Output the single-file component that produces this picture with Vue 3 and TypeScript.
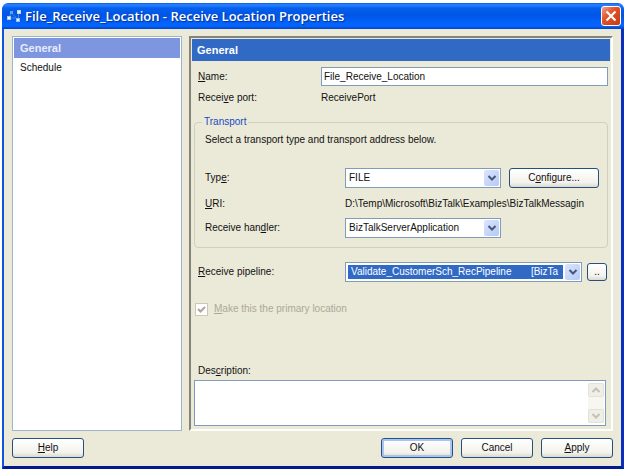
<script setup lang="ts">
import { ref } from 'vue'

const pages = ['General', 'Schedule']
const activePage = ref('General')
const name = ref('File_Receive_Location')
const transport = ref('FILE')
const handler = ref('BizTalkServerApplication')
const pipeline = ref('Validate_CustomerSch_RecPipeline\u00a0\u00a0\u00a0\u00a0\u00a0\u00a0\u00a0[BizTa')
const primary = ref(true)
const description = ref('')
</script>

<template>
  <main class="dialog">
    <header class="titlebar">
      <svg class="app-icon" width="16" height="16" viewBox="0 0 16 16" aria-hidden="true">
        <path d="M3.5 9 L5 4.5 M5 4.5 L10 9.5 M3.5 10 H10 M12.5 5 V12" fill="none" stroke="#4a86d8" />
        <rect x="1" y="8" width="4" height="4" fill="#a9cdf0" />
        <rect x="4" y="3" width="3" height="3" fill="#5ea2f0" />
        <rect x="11" y="2" width="4" height="4" fill="#b9d8f4" />
        <rect x="10" y="10" width="4" height="4" fill="#8fc0e8" />
        <rect x="2" y="9" width="2" height="2" fill="#fff" />
        <rect x="12" y="3" width="2" height="2" fill="#e8f4ff" />
        <rect x="11" y="11" width="2" height="2" fill="#e8f4ff" />
      </svg>
      <h1>File_Receive_Location - Receive Location Properties</h1>
      <button class="close" type="button" aria-label="Close">
        <svg width="18" height="18" viewBox="0 0 18 18" aria-hidden="true">
          <path d="M4.5 4.5 L13.5 13.5 M13.5 4.5 L4.5 13.5" stroke="#fff" stroke-width="2.2" />
        </svg>
      </button>
    </header>

    <div class="client">
      <div class="columns">
        <nav class="pages">
          <button
            v-for="page in pages"
            :key="page"
            type="button"
            class="page"
            :class="{ active: page === activePage }"
            @click="activePage = page"
          >{{ page }}</button>
        </nav>

        <section class="panel">
          <h2>General</h2>
          <div class="form">
            <div class="row name-row">
              <label for="name"><u>N</u>ame:</label>
              <input id="name" v-model="name" class="field" type="text" />
            </div>
            <div class="row port-row">
              <span>Recei<u>v</u>e port:</span>
              <span>ReceivePort</span>
            </div>

            <fieldset class="transport">
              <legend>Transport</legend>
              <p>Select a transport type and transport address below.</p>
              <div class="row">
                <label for="type">Typ<u>e</u>:</label>
                <div class="combo">
                  <select id="type" v-model="transport">
                    <option>FILE</option>
                  </select>
                  <span class="arrow"><svg width="10" height="8" viewBox="0 0 10 8"><path d="M1.5 2 L5 5.5 L8.5 2" /></svg></span>
                </div>
                <button class="btn" type="button">C<u>o</u>nfigure...</button>
              </div>
              <div class="row uri-row">
                <span><u>U</u>RI:</span>
                <span class="uri">D:\Temp\Microsoft\BizTalk\Examples\BizTalkMessagin</span>
              </div>
              <div class="row">
                <label for="handler">Receive han<u>d</u>ler:</label>
                <div class="combo">
                  <select id="handler" v-model="handler">
                    <option>BizTalkServerApplication</option>
                  </select>
                  <span class="arrow"><svg width="10" height="8" viewBox="0 0 10 8"><path d="M1.5 2 L5 5.5 L8.5 2" /></svg></span>
                </div>
              </div>
            </fieldset>

            <div class="row pipeline-row">
              <label for="pipeline"><u>R</u>eceive pipeline:</label>
              <div class="combo selected">
                <select id="pipeline" v-model="pipeline">
                  <option>{{ pipeline }}</option>
                </select>
                <span class="arrow"><svg width="10" height="8" viewBox="0 0 10 8"><path d="M1.5 2 L5 5.5 L8.5 2" /></svg></span>
              </div>
              <button class="btn more" type="button">..</button>
            </div>

            <label class="primary">
              <input v-model="primary" type="checkbox" disabled />
              <svg class="tick" width="9" height="9" viewBox="0 0 9 9" aria-hidden="true"><path d="M1 4 L3.5 6.5 L8 2" /></svg>
              <span><u>M</u>ake this the primary location</span>
            </label>

            <label class="desc-label" for="description">Des<u>c</u>ription:</label>
            <div class="memo">
              <textarea id="description" v-model="description"></textarea>
              <div class="scroll">
                <button type="button" disabled aria-label="Scroll up"><svg width="10" height="8" viewBox="0 0 10 8"><path d="M1.5 6 L5 2.5 L8.5 6" /></svg></button>
                <button type="button" disabled aria-label="Scroll down"><svg width="10" height="8" viewBox="0 0 10 8"><path d="M1.5 2 L5 5.5 L8.5 2" /></svg></button>
              </div>
            </div>
          </div>
        </section>
      </div>

      <footer>
        <button class="btn help" type="button"><u>H</u>elp</button>
        <button class="btn default" type="button">OK</button>
        <button class="btn" type="button">Cancel</button>
        <button class="btn" type="button"><u>A</u>pply</button>
      </footer>
    </div>
  </main>
</template>

<style>
body {
  background: #fff;
}
</style>

<style scoped>
* {
  box-sizing: border-box;
}
.dialog {
  display: flex;
  flex-direction: column;
  min-height: calc(100vh - 5px);
  margin: 3px 3px 0 2px;
  font: 10px/14px "Liberation Sans", Arial, sans-serif;
  color: #111;
}
.dialog button,
.dialog input,
.dialog select,
.dialog textarea {
  font: inherit;
  color: inherit;
}
.titlebar {
  display: flex;
  align-items: center;
  height: 26px;
  padding: 0 3px 0 4px;
  border-radius: 6px 6px 0 0;
  background: linear-gradient(#0a5ce8 0, #2b83ff 2px, #0560ee 5px, #0055e5 12px, #0362fb 20px, #0465ff 23px, #0142c4 26px);
}
.app-icon {
  flex: none;
  margin-right: 3px;
}
h1 {
  flex: 1;
  margin: 0;
  font: 600 13px/18px "Open Sans", "Noto Sans", sans-serif;
  color: #fff;
  text-shadow: 1px 1px 1px #0a2f8c;
  white-space: nowrap;
}
.close {
  display: flex;
  align-items: center;
  justify-content: center;
  width: 20px;
  height: 20px;
  padding: 0;
  border: 1px solid #fff;
  border-radius: 3px;
  background: linear-gradient(135deg, #f0a088, #e2532b 40%, #c9380f);
}
.client {
  flex: 1;
  display: flex;
  flex-direction: column;
  padding: 7px 8px 8px;
  border: solid #0a2fc0;
  border-width: 0 3px 3px 2px;
  border-color: #0a2fc0 #0a2fc0 #001a90 #0f55dd;
  background: #ebe9d8;
}
.columns {
  flex: 1;
  display: grid;
  grid-template-columns: 170px minmax(0, 1fr);
  gap: 7px;
}
.pages {
  padding: 1px;
  border: 1px solid #9cb5cb;
  background: #fff;
}
.page {
  display: block;
  width: 100%;
  height: 20px;
  padding: 0 6px;
  border: 0;
  background: none;
  text-align: left;
}
.dialog .page.active {
  background: #7e96df;
  color: #e6ecfb;
  font: bold 11px/20px "Liberation Sans", Arial, sans-serif;
}
.panel {
  display: flex;
  flex-direction: column;
  padding: 1px;
  border: 2px solid;
  border-color: #85837a #fff #fff #85837a;
}
h2 {
  margin: 0;
  padding: 0 5px;
  background: #316ac5;
  color: #fff;
  font: bold 11px/22px "Liberation Sans", Arial, sans-serif;
}
.form {
  flex: 1;
  display: flex;
  flex-direction: column;
  padding: 6px 2px 2px;
}
.row {
  display: grid;
  align-items: center;
}
.name-row,
.port-row {
  grid-template-columns: 123px minmax(0, 1fr);
  padding-left: 4px;
}
.port-row {
  margin-top: 5px;
}
.field {
  height: 19px;
  min-width: 0;
  padding: 0 2px;
  border: 1px solid #7f9db9;
  background: #fff;
}
.transport {
  display: flex;
  flex-direction: column;
  margin: 10px 0 0;
  min-width: 0;
  padding: 4px 9px 9px 10px;
  border: 1px solid #d0d0bf;
  border-radius: 4px;
}
legend {
  padding: 0 2px;
  margin-left: -3px;
  color: #1c4ac2;
}
.transport p {
  margin: 0 0 21px;
}
.transport .row {
  grid-template-columns: 140px 156px 91px;
}
.transport .btn {
  margin-left: 8px;
  width: 90px;
}
.transport .uri-row {
  grid-template-columns: 140px minmax(0, 1fr);
  padding: 9px 0 7px;
}
.uri {
  overflow: hidden;
  white-space: nowrap;
}
.combo {
  position: relative;
  min-width: 0;
}
.combo select {
  display: block;
  width: 100%;
  height: 20px;
  padding: 2px 18px 2px 3px;
  border: 1px solid #7f9db9;
  border-radius: 0;
  background: #fff;
  appearance: none;
}
.dialog .combo.selected select {
  padding: 2px 18px 2px 2px;
  background: linear-gradient(#316ac5, #316ac5) content-box, #fff;
  color: #fff;
  text-indent: 3px;
}
.arrow {
  position: absolute;
  top: 2px;
  right: 2px;
  display: flex;
  align-items: center;
  justify-content: center;
  width: 15px;
  height: 16px;
  border-radius: 2px;
  background: linear-gradient(135deg, #dbe5fd, #b6c9f5);
  pointer-events: none;
}
.arrow path {
  fill: none;
  stroke: #43577f;
  stroke-width: 2;
}
.btn {
  width: 72px;
  height: 20px;
  padding: 0;
  border: 1px solid #26507f;
  border-radius: 3px;
  background: linear-gradient(#fff, #f3f2ec 75%, #dcd8cc);
  text-align: center;
}
.btn.default {
  box-shadow: inset 0 0 0 2px #a9c4ef;
}
.pipeline-row {
  grid-template-columns: 147px minmax(0, 1fr) 20px;
  margin-top: 14px;
  padding: 0 1px 0 4px;
}
.pipeline-row .combo {
  margin-right: 5px;
}
.more {
  width: 20px;
  height: 18px;
}
.primary {
  position: relative;
  display: flex;
  align-items: center;
  gap: 6px;
  margin: 20px 0 0 1px;
  color: #aca899;
}
.primary input {
  appearance: none;
  width: 13px;
  height: 13px;
  margin: 0;
  border: 1px solid #cac8bb;
  background: #fff;
}
.tick {
  position: absolute;
  left: 2px;
}
.tick path {
  fill: none;
  stroke: #aca899;
  stroke-width: 2;
}
.desc-label {
  margin-top: auto;
  padding-left: 4px;
}
.memo {
  display: flex;
  height: 46px;
  margin: 2px 2px 0 0;
  border: 1px solid #7f9db9;
  background: #fff;
}
.memo textarea {
  flex: 1;
  min-width: 0;
  border: 0;
  padding: 2px;
  resize: none;
  background: none;
  outline: 0;
}
.scroll {
  display: flex;
  flex-direction: column;
  justify-content: space-between;
  width: 16px;
  margin: 2px 1px;
  background: #f7f6f1;
}
.scroll button {
  display: flex;
  align-items: center;
  justify-content: center;
  height: 14px;
  padding: 0;
  border: 1px solid #e4e2d8;
  border-radius: 2px;
  background: #f0efe7;
}
.scroll path {
  fill: none;
  stroke: #c4c2b6;
  stroke-width: 2;
}
footer {
  display: flex;
  gap: 8px;
  padding-top: 7px;
}
.help {
  margin-right: auto;
}
</style>
